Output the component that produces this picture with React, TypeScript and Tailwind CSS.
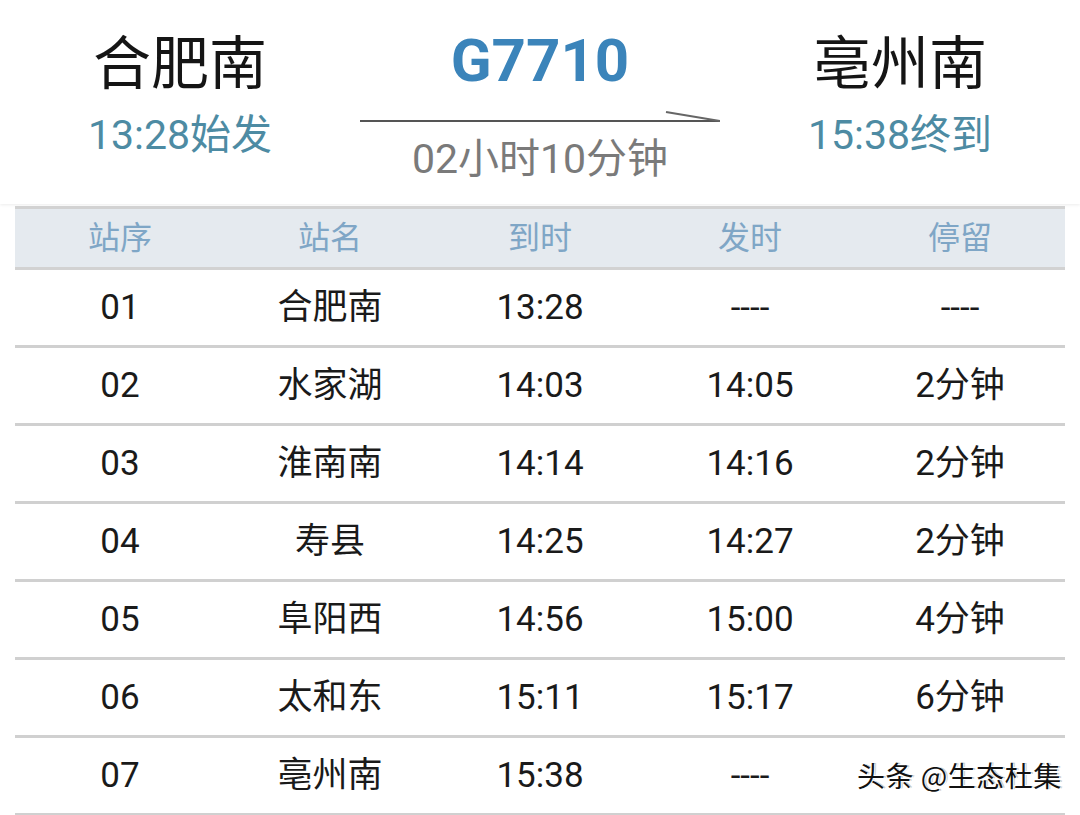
import React from "react";

const rows = [
  ["01", "合肥南", "13:28", "----", "----"],
  ["02", "水家湖", "14:03", "14:05", "2分钟"],
  ["03", "淮南南", "14:14", "14:16", "2分钟"],
  ["04", "寿县", "14:25", "14:27", "2分钟"],
  ["05", "阜阳西", "14:56", "15:00", "4分钟"],
  ["06", "太和东", "15:11", "15:17", "6分钟"],
  ["07", "亳州南", "15:38", "----", ""],
];

const font = { fontFamily: "Roboto, 'Noto Sans CJK SC', sans-serif" };

export default function App() {
  return (
    <div className="w-[1080px] h-[815px] bg-white overflow-hidden relative" style={font}>
      <div className="h-[204px] grid grid-cols-3 bg-white shadow-[0_1px_3px_rgba(0,0,0,0.08)]">
        <div className="flex flex-col items-center pt-[34px]">
          <div className="text-[58px] leading-[60px] text-[#151515]">合肥南</div>
          <div className="mt-[18px] text-[41px] leading-[46px] text-[#4d8ba3]">13:28始发</div>
        </div>
        <div className="flex flex-col items-center pt-[31px]">
          <div className="text-[60px] leading-[60px] font-bold text-[#3b84ba]">G7710</div>
          <svg width="360" height="20" viewBox="0 0 360 20" className="mt-[19px]">
            <line x1="0" y1="11" x2="360" y2="11" stroke="#555" strokeWidth="2" />
            <line x1="306" y1="2" x2="360" y2="11" stroke="#666" strokeWidth="2" />
          </svg>
          <div className="mt-[7px] text-[41px] leading-[44px] text-[#7a7a7a]">02小时10分钟</div>
        </div>
        <div className="flex flex-col items-center pt-[34px]">
          <div className="text-[58px] leading-[60px] text-[#151515]">亳州南</div>
          <div className="mt-[18px] text-[41px] leading-[46px] text-[#4d8ba3]">15:38终到</div>
        </div>
      </div>
      <div className="mx-[15px] mt-[2px]">
        <div className="grid grid-cols-5 h-[64px] bg-[#e5eaef] border-t-[3px] border-b-[3px] border-[#d2d2d2] items-center text-center text-[32px] text-[#7fa6c6]">
          <div>站序</div>
          <div>站名</div>
          <div>到时</div>
          <div>发时</div>
          <div>停留</div>
        </div>
        {rows.map((r, i) => (
          <div
            key={i}
            className="grid grid-cols-5 h-[78px] border-b-[3px] border-[#d0d0d0] items-center text-center text-[35px] text-[#1a1a1a]"
          >
            {r.map((c, j) => (
              <div key={j} className="pt-[2px]">{c}</div>
            ))}
          </div>
        ))}
      </div>
      <div
        className="absolute left-[857px] top-[756px] text-[28px] leading-[38px] tracking-[0.5px] text-[#111] whitespace-nowrap"
        style={{ fontFamily: "'Noto Sans CJK SC', sans-serif", textShadow: "1px 1px 0 #fff, -1px -1px 0 #fff, 2px 0 0 #ccc" }}
      >
        头条 @生态杜集
      </div>
    </div>
  );
}
